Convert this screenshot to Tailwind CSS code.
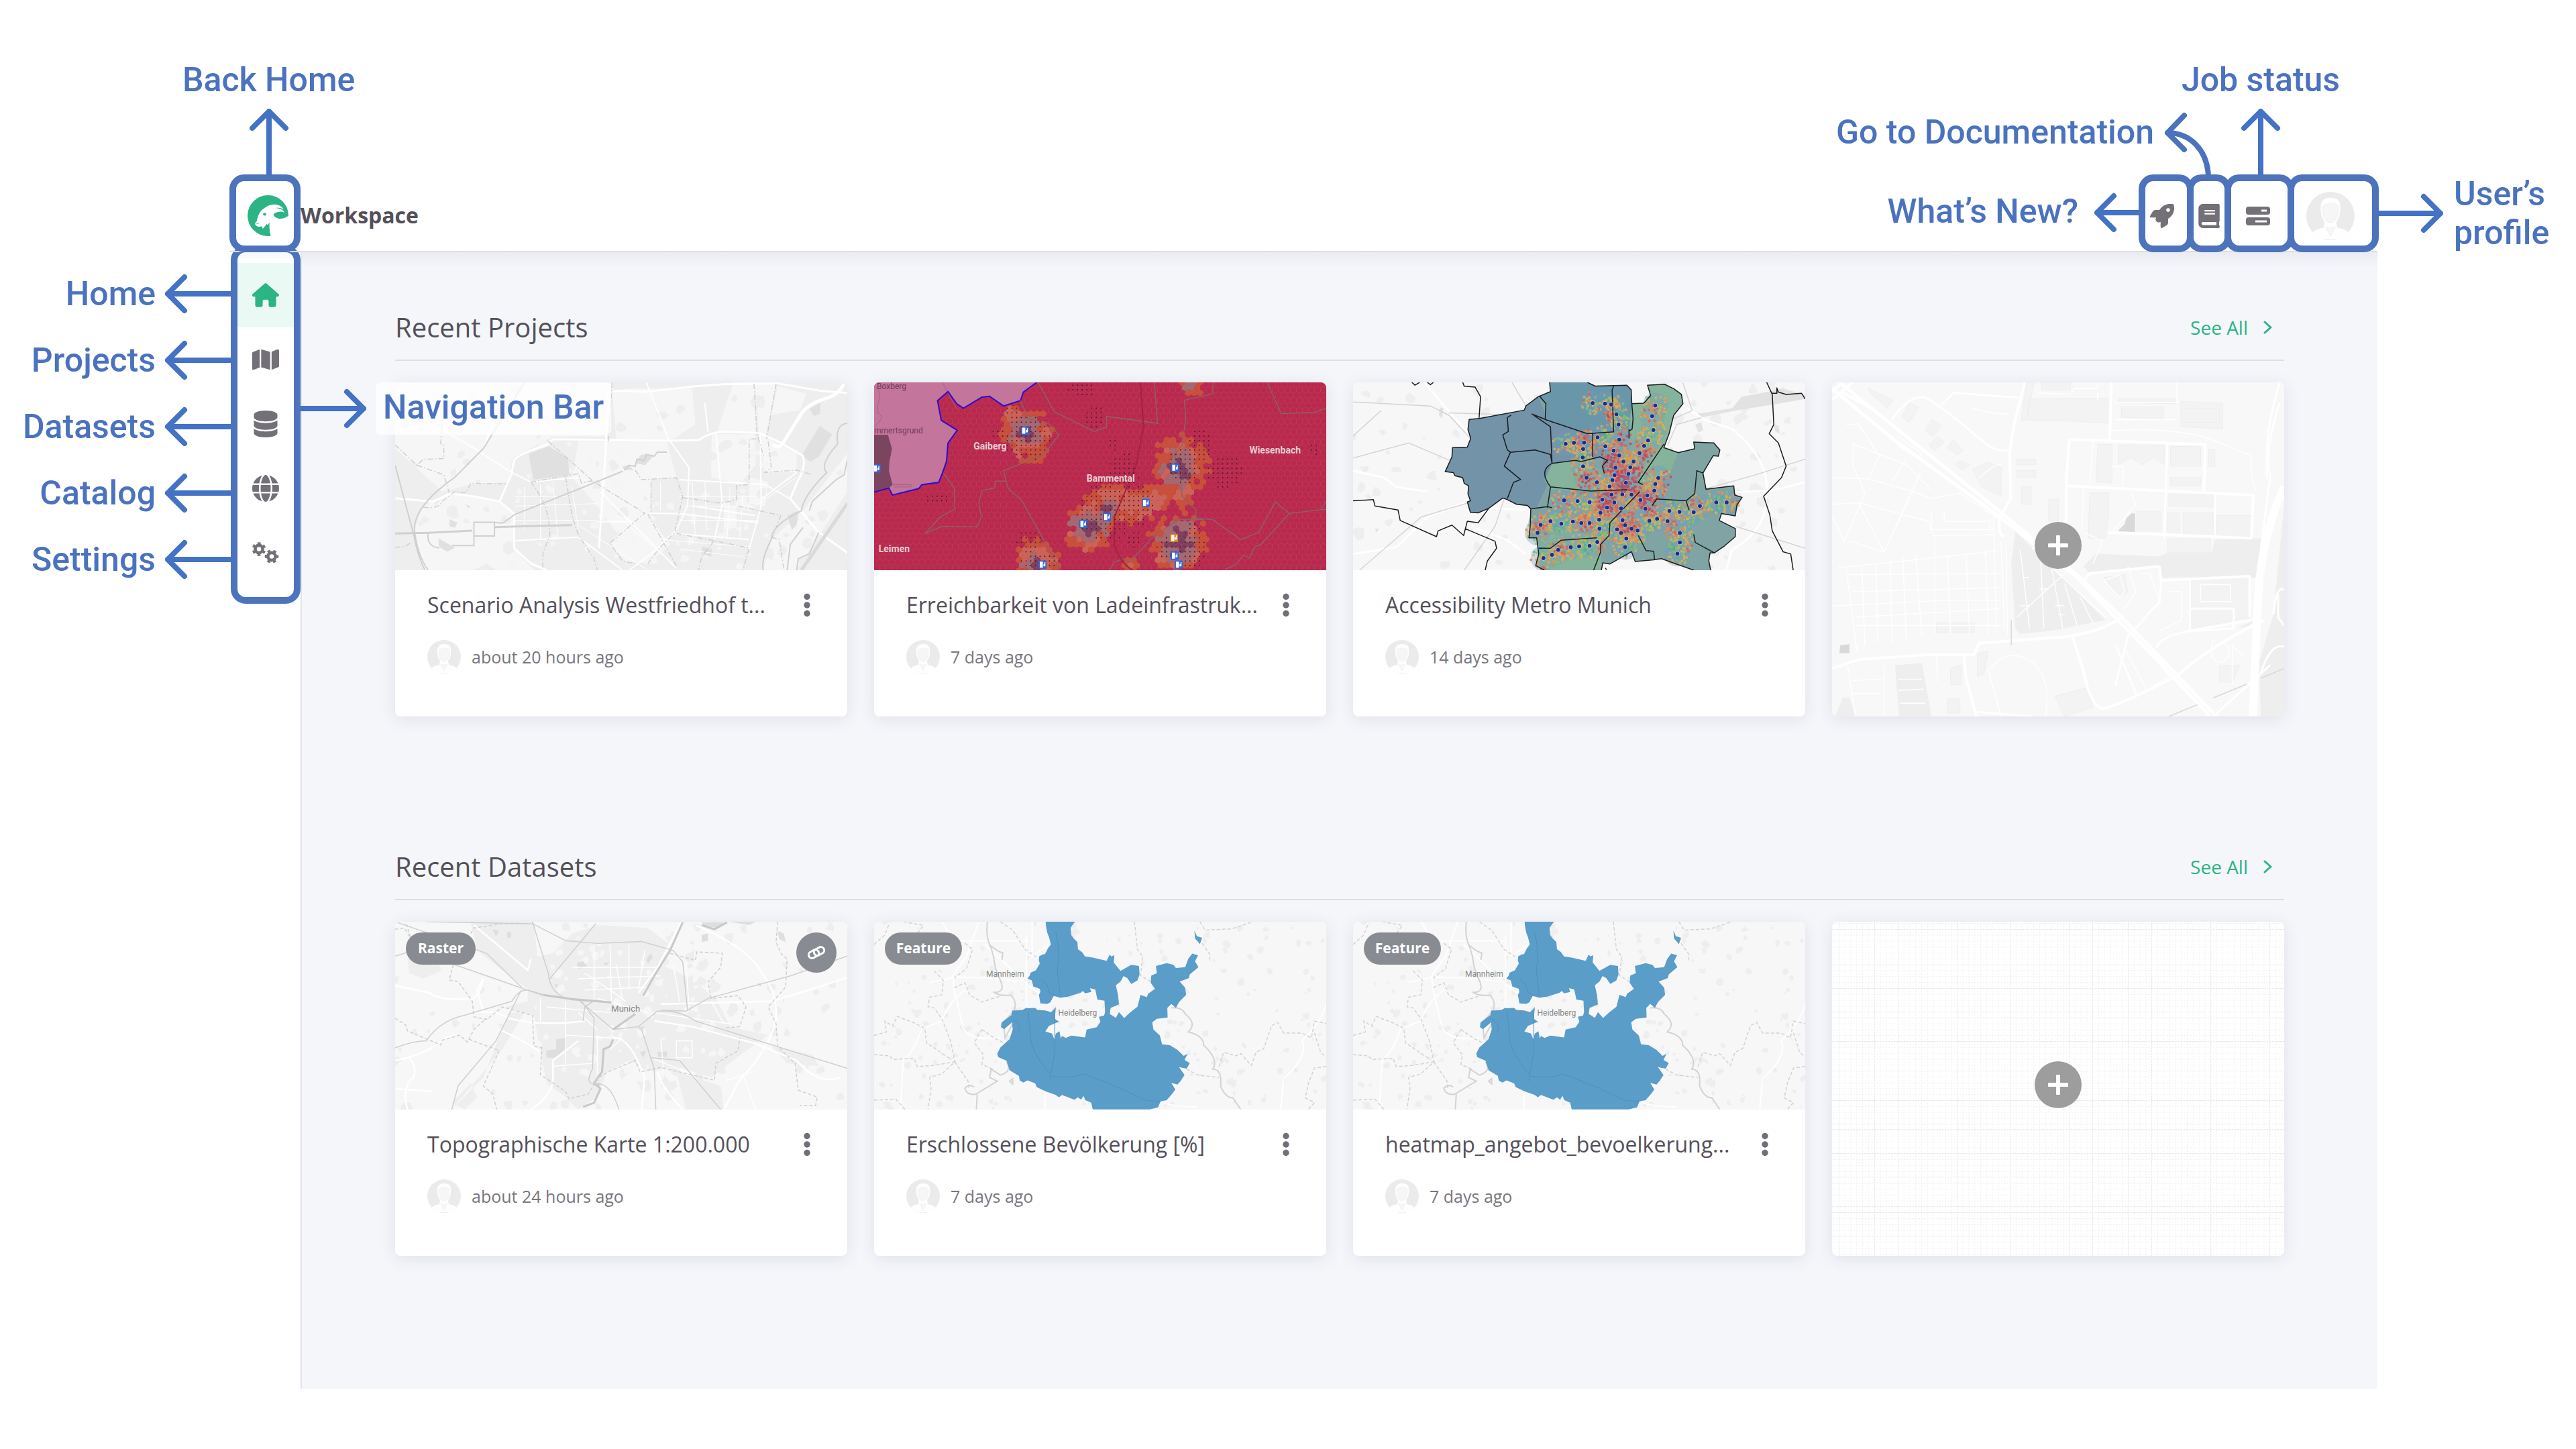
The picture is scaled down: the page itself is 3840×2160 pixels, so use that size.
<!DOCTYPE html>
<html lang="en">
<head>
<meta charset="utf-8">
<meta name="viewport" content="width=device-width, initial-scale=1">
<title>Workspace</title>
<script src="https://cdn.jsdelivr.net/npm/@tailwindcss/browser@4"></script>
</head>
<body class="bg-white font-['Open_Sans',sans-serif] text-[#54505a]">

<!-- Shared symbols -->
<svg class="hidden" aria-hidden="true">
  <symbol id="arrow-left" viewBox="0 0 98 60" preserveAspectRatio="xMinYMid slice"><path d="M29 5 4 30 29 55M4 30H98" fill="none" stroke="#4472c4" stroke-width="8" stroke-linecap="round" stroke-linejoin="round"/></symbol>
  <symbol id="arrow-right" viewBox="0 0 98 60" preserveAspectRatio="xMaxYMid slice"><path d="M69 5 94 30 69 55M94 30H0" fill="none" stroke="#4472c4" stroke-width="8" stroke-linecap="round" stroke-linejoin="round"/></symbol>
  <symbol id="arrow-up" viewBox="0 0 60 98"><path d="M5 29 30 4 55 29M30 4V98" fill="none" stroke="#4472c4" stroke-width="8" stroke-linecap="round" stroke-linejoin="round"/></symbol>
  <symbol id="avatar" viewBox="0 0 50 50">
    <circle cx="25" cy="25" r="25" fill="#ebebeb"/>
    <path d="M4 46Q6 39 18 37L19 31Q14 25 15 14Q16 6 25 6Q35 6 35 14Q36 25 31 31L32 37Q44 39 46 46Q36 52 25 50Q14 52 4 46Z" fill="#fefefe"/>
    <path d="M17 15Q25 9 33 14L33 21Q31 32 25 32Q19 32 17 21Z" fill="#f6f6f6" stroke="#ececec" stroke-width=".5"/>
    <path d="M20 36 25 46 30 36" fill="#f7f7f7" stroke="#ebebeb" stroke-width=".6"/>
    <path d="M19 49.600h12" stroke="#ebebeb" stroke-width=".8"/>
  </symbol>
  <symbol id="kebab" viewBox="0 0 24 36"><g fill="#716e77"><circle cx="12" cy="5.500" r="4.700"/><circle cx="12" cy="18" r="4.700"/><circle cx="12" cy="30.500" r="4.700"/></g></symbol>
  <symbol id="chevron" viewBox="0 0 16 20"><path d="M3 2l9 8-9 8" fill="none" stroke="#2bb381" stroke-width="3" stroke-linecap="round" stroke-linejoin="round"/></symbol>
  <symbol id="plus" viewBox="0 0 30 30"><path d="M15 2v26M2 15h26" stroke="#fff" stroke-width="6" stroke-linecap="round"/></symbol>

  <symbol id="map-heidelberg" viewBox="50 95 1468 784" preserveAspectRatio="none">
    <rect x="50" y="95" width="1468" height="784" fill="#f7f7f7"/>
    <path id="patches-heidelberg" fill="#eeeeee"/>
    <g fill="none" stroke="#fff" stroke-width="2">
      <path vector-effect="non-scaling-stroke" d="M563 95V240L620 190M272 95L300 165 330 175H550M410 190L550 360 590 400M390 95L350 240 300 330 230 348M305 320L310 380 340 540Q360 590 460 580M350 375Q290 430 270 510L205 540Q180 640 145 670L135 878M545 150V450M305 325L420 330 530 345M605 770V878M980 850Q1050 870 1100 868M1518 440Q1500 520 1440 590 1460 660 1380 750L1370 878"/>
    </g>
    <path vector-effect="non-scaling-stroke" d="M418 95Q412 150 425 190T440 260 460 340 440 390Q455 405 495 402 515 430 505 465L470 515 475 580 500 520M480 680Q500 720 460 735L430 710 425 745 450 760 380 815Q350 820 345 790 360 770 375 785M385 815 382 878M500 750l-10 10 10 12zM425 190Q450 220 468 225L465 255M1015 455Q1050 450 1060 480 1100 520 1070 555 1120 570 1120 610 1170 670 1150 710 1180 710 1175 780 1190 830 1215 830L1240 878" fill="none" stroke="#d3d3d3" stroke-width="2"/>
    <path vector-effect="non-scaling-stroke" d="M50 190L85 150 100 100M145 95L210 110 190 145M345 185L370 210 350 290 310 330M245 300L275 340 270 400 230 410 225 450 245 455 270 500 300 600 312 680M50 570L90 555 85 510 110 530 125 490 185 520 215 540 220 600 300 670M50 650L100 655 110 670 180 665 190 700 240 695 312 680 270 730 230 745 235 790 225 878M312 680L355 760 358 790M50 840L120 835 150 878M310 370L345 350 360 400 400 430 460 405M460 95L500 130 540 210 575 240M895 95L905 210 922 240 915 320 948 345M1108 95L1125 130 1210 125 1280 95M1115 185L1140 230 1140 262M1065 710L1100 735 1170 745M1170 700L1185 640 1225 655 1240 645 1275 695 1290 640 1315 625 1340 530 1360 515 1380 560 1440 560 1470 580 1480 510 1518 520M1480 560L1500 640 1518 660M1518 700L1480 705 1460 770 1450 830 1480 850 1460 878M400 545L375 600 405 650 400 690 435 710M400 545L440 580 470 600" fill="none" stroke="#d2d2d2" stroke-width="1.500" stroke-dasharray="5 3"/>
    <path fill="#5a9dc9" d="M607 95 608 112 612 140 618 160 624 190 615 205 605 230 596 232 586 240 585 256 588 270 575 298 558 308 556 318 548 332 562 340 567 365 588 375 590 388 585 400 590 436 612 438 622 432 633 405 655 412 680 408 720 392 728 384 735 394 755 388 751 372 768 378 775 420 798 425 800 470 797 486 780 492 785 512 773 535 740 545 735 578 700 572 690 570 672 580 660 572 656 582 652 552 640 562 635 586 628 562 606 553 618 530 650 512 637 500 640 452 625 472 605 465 580 463 573 455 548 456 545 454 530 464 498 466 496 485 464 515 462 535 472 544 498 515 500 545 490 585 460 620 450 645 453 660 480 675 490 715 520 738 523 758 535 766 548 757 573 770 578 785 605 802 640 818 650 828 660 818 700 838 712 828 722 838 730 822 736 840 755 850 760 878 945 878 972 870 980 845 1000 840 1020 810 1028 795 1015 768 1035 775 1045 760 1058 735 1040 702 1065 708 1075 685 1058 672 1068 646 1055 655 1035 630 1010 610 985 607 978 570 957 545 953 515 968 500 1003 495 1002 455 1015 438 1030 455 1040 430 1063 400 1060 370 1042 345 1072 330 1075 315 1103 285 1092 260 1102 235 1083 228 1070 250 1060 285 1030 288 1022 275 1000 268 965 280 968 310 950 320 948 350 962 375 940 395 935 410 915 400 905 450 880 475 862 497 845 472 835 496 815 480 818 455 845 440 842 400 835 360 850 345 860 322 872 330 885 355 905 340 912 315 910 280 885 275 850 300 828 265 830 235 820 240 815 232 805 258 760 245 735 240 725 222 712 210 710 180 698 165 690 150 688 120 702 95ZM1090 132 1098 155 1115 162 1108 188 1092 165Z"/>
    <path vector-effect="non-scaling-stroke" d="M640 140Q655 220 645 300L655 410M590 335Q615 350 618 390L640 405M550 470L560 600Q580 680 630 740 700 750 730 730L850 790 930 840 980 845M637 480V640L620 760M500 500Q530 530 520 555" fill="none" stroke="#4f90bd" stroke-width="1"/>
  </symbol>
</svg>

<!-- Callouts above the window -->
<div class="flex h-[260px] items-end justify-between pl-[272px] pr-[350px] font-['Roboto',sans-serif] text-[50px] leading-[58px] font-medium text-[#4a72bf]">
  <div class="flex flex-col items-center gap-[14px]">
    <p>Back Home</p>
    <svg class="h-[98px] w-[60px]"><use href="#arrow-up"/></svg>
  </div>
  <div class="flex items-end">
    <div class="flex items-start gap-3">
      <p class="mt-1">Go to Documentation</p>
      <svg class="h-24 w-[75px]" viewBox="0 0 75 96" fill="none" stroke="#4a72bf" stroke-width="8" stroke-linecap="round" stroke-linejoin="round"><path d="M33 8 8 34 33 59M8 34C42 34 68 60 69 100"/></svg>
    </div>
    <div class="-ml-12 flex w-60 flex-col items-center gap-[14px]">
      <p>Job status</p>
      <svg class="h-[98px] w-[60px]"><use href="#arrow-up"/></svg>
    </div>
  </div>
</div>

<!-- Header -->
<header class="relative z-20 flex pl-[342px]">
  <div class="flex h-[116px] flex-1 items-center border-b-2 border-[#dddfe3]">
    <a href="#home" aria-label="Back home" class="-mb-[2px] flex h-[116px] w-[106px] shrink-0 items-center justify-center rounded-[22px] border-10 border-[#4c73bc] bg-white pt-1.5 pl-2">
      <svg class="size-[61px]" viewBox="148 118 182 140" preserveAspectRatio="none">
        <ellipse cx="239" cy="188" rx="91" ry="70" fill="#2db484"/>
        <path fill="#fff" d="M252 260C246 242 244 226 246 211L237 220 234 216 216 233 212 225 197 226C187 224 181 220 181 214L190 205C193 188 205 170 220 164 238 152 262 147 280 151 296 153 306 161 308 167 298 161 284 160 272 162 290 162 309 168 312 178 304 173 284 172 264 182 262 190 280 200 300 198 312 197 324 192 332 187V262Z"/>
        <ellipse cx="224" cy="183" rx="7" ry="5" fill="#2db484"/>
        <path d="M182 212Q190 218 200 214" fill="none" stroke="#2db484" stroke-width="2"/>
      </svg>
    </a>
    <h1 class="pt-2 text-[32px] leading-10 font-bold">Workspace</h1>
    <div class="ml-auto flex items-center gap-6 font-['Roboto',sans-serif] text-[50px] leading-[58px] font-medium text-[#4a72bf]">
      <p class="pb-1">What’s New?</p>
      <svg class="h-[60px] w-[66px]"><use href="#arrow-left"/></svg>
    </div>
    <div class="-mr-[2px] -mb-[2px] flex h-[116px]">
      <button aria-label="What's new" class="flex w-[82px] items-center justify-center rounded-[22px] border-10 border-[#4c73bc] pt-2 pr-3">
        <svg class="size-9 shrink-0" viewBox="0 0 512 512" fill="#737077"><path d="M156.600 384.900L125.700 354c-8.500-8.500-11.500-20.800-7.700-32.200c3-8.900 7-20.500 11.800-33.800L24 288c-8.600 0-16.600-4.600-20.900-12.100s-4.200-16.700 .2-24.100l52.500-88.500c13-21.900 36.500-35.300 61.900-35.300l82.300 0c2.400-4 4.800-7.700 7.200-11.300C289.100-4.100 411.100-8.100 483.900 5.300c11.600 2.100 20.600 11.200 22.800 22.800c13.400 72.900 9.300 194.800-111.400 276.700c-3.500 2.400-7.300 4.800-11.300 7.200v82.300c0 25.400-13.400 49-35.300 61.900l-88.500 52.500c-7.400 4.400-16.600 4.500-24.100 .2s-12.100-12.200-12.100-20.900V380.800c-14.100 4.900-26.400 8.900-35.700 11.900c-11.200 3.600-23.400 .5-31.800-7.800zM384 168a40 40 0 1 0 0-80 40 40 0 1 0 0 80z"/></svg>
      </button>
      <button aria-label="Documentation" class="-ml-[10px] flex w-[66px] items-center justify-center rounded-[22px] border-10 border-[#4c73bc] pt-2">
        <svg class="h-9 w-8 shrink-0" viewBox="0 0 448 512" fill="#737077"><path d="M448 360V24c0-13.300-10.700-24-24-24H96C43 0 0 43 0 96v320c0 53 43 96 96 96h328c13.300 0 24-10.700 24-24v-16c0-7.500-3.500-14.300-8.900-18.700-4.200-15.400-4.200-59.300 0-74.700 5.400-4.300 8.900-11.100 8.900-18.600zM128 134c0-3.300 2.700-6 6-6h212c3.300 0 6 2.700 6 6v20c0 3.300-2.700 6-6 6H134c-3.300 0-6-2.700-6-6v-20zm0 64c0-3.300 2.700-6 6-6h212c3.300 0 6 2.700 6 6v20c0 3.300-2.700 6-6 6H134c-3.300 0-6-2.700-6-6v-20zm253.400 250H96c-17.700 0-32-14.300-32-32 0-17.600 14.400-32 32-32h285.400c-1.900 17.100-1.900 46.900 0 64z"/></svg>
      </button>
      <button aria-label="Job status" class="-ml-[10px] flex w-[104px] items-center justify-center rounded-[22px] border-10 border-[#4c73bc] pt-2 pr-1">
        <svg class="h-7 w-9" viewBox="0 0 36 28"><g fill="#737077"><rect width="36" height="12" rx="4"/><rect y="16" width="36" height="12" rx="4"/></g><path d="M23 6h8M14 22h17" stroke="#fff" stroke-width="3"/></svg>
      </button>
      <button aria-label="User's profile" class="-ml-[10px] flex w-[136px] items-center justify-center rounded-[22px] border-10 border-[#4c73bc] pt-2 pr-2">
        <svg class="size-[72px]"><use href="#avatar"/></svg>
      </button>
    </div>
  </div>
  <div class="flex w-[296px] shrink-0 items-center gap-4 font-['Roboto',sans-serif] text-[50px] leading-[58px] font-medium text-[#4a72bf]">
    <svg class="h-[60px] w-[98px] shrink-0"><use href="#arrow-right"/></svg>
    <p>User’s<br>profile</p>
  </div>
</header>

<div class="flex pr-[296px] pb-[90px]">
  <!-- Sidebar callouts -->
  <ul class="flex w-[344px] shrink-0 flex-col pt-3 font-['Roboto',sans-serif] text-[50px] leading-[58px] font-medium text-[#4a72bf]">
    <li class="flex h-[99px] items-center justify-end gap-[14px]">Home <svg class="h-[60px] w-[98px]"><use href="#arrow-left"/></svg></li>
    <li class="flex h-[99px] items-center justify-end gap-[14px]">Projects <svg class="h-[60px] w-[98px]"><use href="#arrow-left"/></svg></li>
    <li class="flex h-[99px] items-center justify-end gap-[14px]">Datasets <svg class="h-[60px] w-[98px]"><use href="#arrow-left"/></svg></li>
    <li class="flex h-[99px] items-center justify-end gap-[14px]">Catalog <svg class="h-[60px] w-[98px]"><use href="#arrow-left"/></svg></li>
    <li class="flex h-[99px] items-center justify-end gap-[14px]">Settings <svg class="h-[60px] w-[98px]"><use href="#arrow-left"/></svg></li>
  </ul>

  <!-- Navigation bar -->
  <aside class="relative z-10 w-[104px] shrink-0">
    <nav class="-mt-[10px] rounded-[22px] border-10 border-[#4c73bc] bg-linear-to-b from-[#f7f7f8] to-white to-[16px] pt-4 pb-[18px]">
      <a href="#home" aria-label="Home" class="flex h-24 items-center justify-center bg-[#ebf9f5]"><svg class="h-9 w-10" viewBox="0 0 576 512" fill="#2db484"><path d="M575.800 255.500c0 18-15 32.100-32 32.100h-32l.7 160.200c0 2.700-.2 5.400-.5 8.100V472c0 22.100-17.900 40-40 40H392c-22.100 0-40-17.900-40-40V384c0-17.700-14.300-32-32-32H256c-17.700 0-32 14.300-32 32v88c0 22.100-17.900 40-40 40H104c-22.100 0-40-17.900-40-40V287.600H32c-18 0-32-14-32-32.100c0-9 3-17 10-24L266.400 8c7-7 15-8 22-8s15 2 21 7L564.800 231.500c8 7 12 15 11 24z"/></svg></a>
      <a href="#projects" aria-label="Projects" class="flex h-24 items-center justify-center"><svg class="h-9 w-10" viewBox="0 0 576 512" fill="#737077"><path d="M384 476.100L192 421.200V35.900L384 90.800V476.100zm32-1.200V88.400L543.100 37.500c15.800-6.300 32.900 5.300 32.900 22.300V394.600c0 9.800-6 18.600-15.100 22.300L416 474.800zM15.100 95.100L160 37.200V423.600L32.900 474.500C17.100 480.800 0 469.200 0 452.200V117.400c0-9.800 6-18.600 15.100-22.300z"/></svg></a>
      <a href="#datasets" aria-label="Datasets" class="flex h-24 items-center justify-center"><svg class="size-10" viewBox="-32 0 512 512" fill="#737077"><path d="M448 80v48c0 44.200-100.300 80-224 80S0 172.200 0 128V80C0 35.800 100.300 0 224 0S448 35.800 448 80zM393.200 214.700c20.800-7.400 39.900-16.900 54.800-28.600V288c0 44.200-100.300 80-224 80S0 332.200 0 288V186.100c14.900 11.800 34 21.200 54.800 28.600C99.700 230.700 159.500 240 224 240s124.300-9.300 169.200-25.300zM0 346.100c14.900 11.800 34 21.200 54.800 28.600C99.700 390.700 159.500 400 224 400s124.300-9.300 169.200-25.300c20.800-7.400 39.900-16.900 54.800-28.600V432c0 44.200-100.300 80-224 80S0 476.200 0 432V346.100z"/></svg></a>
      <a href="#catalog" aria-label="Catalog" class="flex h-24 items-center justify-center"><svg class="size-10" viewBox="0 0 512 512" fill="#737077"><path d="M352 256c0 22.200-1.200 43.600-3.300 64H163.300c-2.200-20.400-3.300-41.800-3.300-64s1.200-43.600 3.300-64H348.700c2.200 20.400 3.300 41.800 3.300 64zm28.800-64H503.900c5.300 20.500 8.100 41.900 8.100 64s-2.800 43.500-8.100 64H380.800c2.100-20.600 3.200-42 3.200-64s-1.100-43.400-3.200-64zm112.600-32H376.700c-10-63.900-29.800-117.400-55.300-151.600c78.300 20.700 142 77.500 171.900 151.600zm-149.100 0H167.700c6.100-36.400 15.500-68.600 27-94.700c10.500-23.600 22.200-40.700 33.500-51.500C239.400 3.200 248.700 0 256 0s16.600 3.200 27.800 13.800c11.300 10.800 23 27.900 33.500 51.500c11.600 26 20.900 58.200 27 94.700zm-209 0H18.600C48.600 85.900 112.200 29.100 190.600 8.400C165.100 42.600 145.300 96.100 135.300 160zM8.100 192H131.200c-2.100 20.600-3.200 42-3.200 64s1.100 43.400 3.200 64H8.100C2.800 299.500 0 278.100 0 256s2.800-43.500 8.100-64zM194.700 446.600c-11.600-26-20.900-58.200-27-94.600H344.300c-6.100 36.400-15.500 68.600-27 94.600c-10.500 23.600-22.200 40.700-33.500 51.500C272.600 508.800 263.300 512 256 512s-16.600-3.200-27.800-13.800c-11.300-10.800-23-27.900-33.500-51.500zM135.300 352c10 63.900 29.800 117.400 55.300 151.600C112.200 482.900 48.600 426.100 18.600 352H135.300zm358.100 0c-30 74.100-93.600 130.900-171.900 151.600c25.500-34.200 45.200-87.700 55.300-151.600H493.400z"/></svg></a>
      <a href="#settings" aria-label="Settings" class="flex h-24 items-center justify-center"><svg class="size-10" viewBox="0 0 40 40" fill="none" stroke="#737077"><circle cx="10" cy="14.500" r="5.600" stroke-width="4.600"/><circle cx="10" cy="14.500" r="8.600" stroke-width="3.400" stroke-dasharray="4.503" stroke-dashoffset="2.250" transform="rotate(30 10 14.500)"/><circle cx="29" cy="25.500" r="5.600" stroke-width="4.600"/><circle cx="29" cy="25.500" r="8.600" stroke-width="3.400" stroke-dasharray="4.503" stroke-dashoffset="2.250"/></svg></a>
    </nav>
    <div class="absolute top-[194px] left-full flex items-center gap-[14px] font-['Roboto',sans-serif] text-[50px] leading-[58px] font-medium text-[#4a72bf]">
      <svg class="h-[60px] w-[98px] shrink-0"><use href="#arrow-right"/></svg>
      <p class="rounded-lg bg-white/75 px-[11px] pt-2 pb-3 whitespace-nowrap">Navigation Bar</p>
    </div>
  </aside>

  <!-- Workspace content -->
  <main class="min-w-0 flex-1 border-l-2 border-[#e2e4ea] bg-[#f4f6fa]">
    <div class="h-6 bg-linear-to-b from-[#ebecf2] to-[#f4f6fa]"></div>
    <div class="flex flex-col gap-44 px-[139px] pt-10 pb-[198px]">

      <section class="flex flex-col gap-8" aria-labelledby="recent-projects">
        <div class="flex h-[98px] items-center justify-between border-b-2 border-[#dcdee3] pr-4">
          <h2 id="recent-projects" class="text-[40px] leading-[56px]">Recent Projects</h2>
          <a href="#projects" class="flex items-center gap-[22px] text-[28px] leading-9 text-[#2bb381]">See All <svg class="h-5 w-4"><use href="#chevron"/></svg></a>
        </div>
        <div class="grid grid-cols-4 gap-10">

          <article class="h-[498px] overflow-hidden rounded-lg bg-white shadow-[0_4px_24px_rgba(58,53,90,0.10)]">
            <svg class="h-[280px] w-full" viewBox="61 84 1429 784" preserveAspectRatio="none" aria-hidden="true">
              <rect x="61" y="84" width="1429" height="784" fill="#eeeeee"/>
              <path fill="#f6f6f6" d="M61 84H747L730 310H560L430 400 420 500 300 510 210 540 61 360ZM150 600L235 550 390 580 437 640V770L310 870H150L122 700ZM640 330H920L950 480 870 490 866 630 760 710 700 600 620 480ZM800 110H1000L1010 260 940 320H760L747 120ZM1060 300H1200V430L1150 510 1060 480ZM1130 84H1200V290L1080 285ZM1200 90H1265L1230 320 1210 300ZM1270 100L1360 130 1340 200 1250 220ZM1350 620L1490 380V540L1330 868H1225L1250 740ZM800 650L860 640 930 760 860 840 790 830 740 760ZM1210 300L1330 380 1330 460 1230 460ZM1100 600H1140V690L1100 700ZM1180 480L1240 500 1230 600 1180 590ZM310 800L430 770 500 868H380Z"/>
              <path id="patches-west-a" fill="#eeeeee"/>
              <path id="patches-west-b" fill="#f5f5f5"/>
              <path fill="#e0e0e0" d="M483 383 545 350 608 400 611 470 498 490ZM1403 265 1442 300 1400 395 1375 415 1345 390ZM1370 195 1405 170V215L1385 225ZM780 435L800 430 815 450 785 450ZM820 420 840 385 880 390 850 430ZM198 735 250 775 225 790 200 770ZM233 655 258 670 250 690 233 685ZM1300 640 1335 620 1330 680 1315 700ZM1030 770 1063 780 1060 812 1030 800ZM283 593l15 8-5 8z"/>
              <g fill="none" stroke="#fff" stroke-linejoin="round">
                <path vector-effect="non-scaling-stroke" stroke-width="3" d="M747 118 855 123 1010 100 1100 92 1270 88 1400 118 1490 128M928 327 560 321 540 345Q445 385 437 410L428 470 392 578M61 568 180 582 235 548 310 560 390 580 437 632V775L490 840 540 868M735 118 725 400 705 775M928 327 1020 325Q1060 290 1100 290L1210 295 1270 330 1350 390Q1360 440 1335 490L1310 570 1400 710 1490 795"/>
                <path vector-effect="non-scaling-stroke" stroke-width="5" d="M1480 90Q1460 140 1420 152 1360 175 1340 225L1283 345Q1268 362 1256 342"/>
                <path vector-effect="non-scaling-stroke" stroke-width="2" d="M61 290 180 260 300 350 430 460 490 500 640 480M855 84 925 320 990 440 985 600 950 700 870 800 800 868M1075 290 1095 590 1070 740M1215 295 1218 600 1180 780M960 490 1230 510 1310 570M865 630 960 632 1210 670M437 745 640 730 780 868M710 540 950 860M1330 460 1220 570M210 250 61 292M420 80 340 360M1040 170 1050 290M700 665H810M945 715 1180 740M1000 600 1200 640"/>
                <path vector-effect="non-scaling-stroke" stroke-width="1" d="M470 520V700M520 510V740M560 500 575 730M620 520 640 700M900 500V620M1000 500 1010 740M1040 500 1045 700M1120 520 1110 740M1160 560 1150 730M440 560H600M440 600 700 590M440 660H700M640 680 860 868M760 640 940 840M960 560H1210M960 600H1200M960 660H1210M900 740 1180 770M960 780 1150 810M1200 600 1330 480"/>
              </g>
              <g fill="none" stroke="#d0d0d0">
                <path vector-effect="non-scaling-stroke" stroke-width="2" d="M470 84 340 360 250 480Q120 600 122 700 130 800 165 868M61 430 120 720Q130 800 155 868M440 635 640 530 780 455M375 668 400 672 440 635M310 668H375V725H310ZM165 712Q160 770 200 775M240 765H310V725M1490 255Q1450 260 1460 340 1400 430 1425 460 1350 560 1345 620 1250 680 1250 740 1215 830 1225 868M1490 410 1480 470 1455 490 1380 580 1370 620M1350 690 1310 760 1300 868M1400 710 1370 800 1335 820 1330 868M785 450 800 430 820 435 825 405 850 410 855 385 880 392 890 375 920 375"/>
                <path vector-effect="non-scaling-stroke" stroke-width="3" d="M61 715 165 712 305 703M375 688 620 680"/>
                <path vector-effect="non-scaling-stroke" stroke-width="5" stroke="#dadada" d="M1490 590 1345 868"/>
                <path vector-effect="non-scaling-stroke" stroke-width="1.500" stroke-dasharray="8 3 2 3" d="M61 345 130 430 150 405 215 402V345L205 340 210 240M130 430 215 470 232 545M150 605Q200 615 210 580L250 540 285 545 300 505 420 508M545 330 690 500 850 630 740 755 780 830 820 840M490 500 640 465 650 505 680 495 690 500M820 450 840 490 950 482 970 560 945 710 900 770 860 840M970 565 1090 588 1140 575 1140 515 1180 510V320H1205M1195 90 1205 300 1225 390M1265 90 1235 320M1240 330 1250 440 1230 460 1330 450 1380 470M490 500Q550 600 550 720L528 800V868M600 480 620 640 640 720 690 820 700 868M1145 600 1280 640 1250 740M870 500V630M950 715 1070 745 1180 775 1160 868M1070 745 1030 810 1020 868M1250 730 1275 740 1290 868M747 84 735 330M860 635 950 850M61 772 90 770 115 750"/>
              </g>
            </svg>
            <div class="px-12 pt-7">
              <div class="flex items-center justify-between gap-4">
                <h3 class="text-[32px] leading-12 whitespace-nowrap">Scenario Analysis Westfriedhof t...</h3>
                <button aria-label="More options" class="shrink-0"><svg class="h-9 w-6"><use href="#kebab"/></svg></button>
              </div>
              <div class="mt-7 flex items-center gap-4 text-[25px] leading-8 text-[#79767d]"><svg class="size-[50px]"><use href="#avatar"/></svg>about 20 hours ago</div>
            </div>
          </article>

          <article class="h-[498px] overflow-hidden rounded-lg bg-white shadow-[0_4px_24px_rgba(58,53,90,0.10)]">
            <div class="relative h-[280px] font-['Roboto',sans-serif] text-[14px] leading-4 font-bold text-[#e6cfd4]">
              <svg class="size-full" viewBox="50 58 1468 812" preserveAspectRatio="none" aria-hidden="true">
                <defs><pattern id="hex" width="19.600" height="45.200" patternUnits="userSpaceOnUse"><path d="M9.800 0V7.500L0 15V30L9.800 37.600V45.200M9.800 7.500 19.600 15M9.800 37.600 19.600 30" fill="none" stroke="#d0597a" stroke-width="1.300"/></pattern></defs>
                <rect x="50" y="58" width="1468" height="812" fill="#b8294d"/>
                <g id="hex-clusters"></g>
                <rect x="50" y="58" width="1468" height="812" fill="url(#hex)" opacity=".55"/>
                <path d="M50 58H578L535 100 525 137 470 160 425 118 400 122 340 170 318 150 290 98 256 137 268 222 320 265 290 320 285 400 272 450 260 490 205 500 195 517 110 545 98 515 50 532Z" fill="#c4759c"/>
                <path d="M50 285H95L108 345 100 400 98 440 110 500 98 515 50 532Z" fill="#7b4560"/>
                <path vector-effect="non-scaling-stroke" stroke="#a3627f" fill="none" d="M272 58 300 130 320 175M50 75Q75 90 65 140T70 200 50 250M110 500H170V510H115"/>
                <path vector-effect="non-scaling-stroke" stroke-width="2" stroke="#2d0bd0" fill="none" d="M578 58 535 100 525 137 470 160 425 118 400 122 340 170 318 150 290 98 256 137 268 222 320 265 290 320 285 400 272 450 260 490 205 500 195 517 110 545 98 515 50 532"/>
                <path vector-effect="non-scaling-stroke" stroke-width="1.500" stroke="#8d6166" fill="none" d="M582 58 635 185 765 270 805 250V205L970 235 960 58M525 137 550 215 615 235 650 285 600 370 470 440 485 515 530 570 655 870M480 485H445L440 515 400 525 390 580 398 640 385 683 270 680 215 712 265 640 312 605 310 515 275 450M1150 58V108L1057 135 1062 210 1050 330 1025 370 1045 480 1050 550 1095 610V645L1150 652 1240 738 1300 705 1353 575 1398 625 1500 608 1518 570M1398 625 1305 760 1285 770 1270 818 1250 805 1220 850 1190 865M1325 58 1340 100 1372 193 1480 188 1518 170M1120 652 1040 650 960 720 880 835 860 820 830 835 815 870M1500 608H1518"/>
                <path vector-effect="non-scaling-stroke" stroke-width="2" stroke="#a1233f" fill="none" d="M915 58 925 250 900 420 830 640 830 760Q850 840 890 870"/>
                <path id="hex-dots" vector-effect="non-scaling-stroke" stroke="#451b2f" stroke-width="2" stroke-linecap="round"/>
                <g id="pumps"></g>
              </svg>
              <span class="absolute top-0 left-1 text-[12px] leading-3 font-normal text-[#6d3a55]">Boxberg</span>
              <span class="absolute top-[64px] left-0 text-[12px] font-normal text-[#6d3a55]">mmertsgrund</span>
              <span class="absolute top-[87px] left-[22%]">Gaiberg</span>
              <span class="absolute top-[135px] left-[47%]">Bammental</span>
              <span class="absolute top-[93px] left-[83%]">Wiesenbach</span>
              <span class="absolute top-[240px] left-[1%]">Leimen</span>
            </div>
            <div class="px-12 pt-7">
              <div class="flex items-center justify-between gap-4">
                <h3 class="text-[32px] leading-12 whitespace-nowrap">Erreichbarkeit von Ladeinfrastruk...</h3>
                <button aria-label="More options" class="shrink-0"><svg class="h-9 w-6"><use href="#kebab"/></svg></button>
              </div>
              <div class="mt-7 flex items-center gap-4 text-[25px] leading-8 text-[#79767d]"><svg class="size-[50px]"><use href="#avatar"/></svg>7 days ago</div>
            </div>
          </article>

          <article class="h-[498px] overflow-hidden rounded-lg bg-white shadow-[0_4px_24px_rgba(58,53,90,0.10)]">
            <svg class="h-[280px] w-full" viewBox="59 58 1468 812" preserveAspectRatio="none" aria-hidden="true">
              <rect x="59" y="58" width="1468" height="812" fill="#f7f7f7"/>
              <path id="patches-metro" fill="#eeeeee"/>
              <path fill="#e2e2e2" d="M1290 170 1320 120 1420 95 1450 85 1527 110V130L1440 150 1300 180 1190 210 1170 195ZM1170 240 1190 230 1195 265 1180 275ZM340 165 352 170 348 215 338 200ZM1425 240 1440 245 1445 280 1430 270ZM130 690 143 690 135 708Z"/>
              <path vector-effect="non-scaling-stroke" fill="none" stroke="#fff" stroke-width="3" d="M290 58 420 260 480 350M59 800 200 770 300 640 420 580M1100 130 1200 220 1290 260Q1420 400 1400 560 1400 700 1290 780L1270 870M1200 540 1420 525 1527 490M59 440 160 470 200 510 300 530M460 690 560 740 620 800M480 600 620 610"/>
              <path vector-effect="non-scaling-stroke" fill="none" stroke="#d4d4d4" stroke-width="1.500" d="M59 143 310 160 370 200 440 300M59 385 240 320 380 400M80 870 280 640 430 580M550 560 520 680 420 870M575 58 620 160M1300 680 1527 775M1527 390 1360 460 1200 520M150 180 59 290M370 190 500 195 620 205M1130 60 1160 180 1100 215M1080 330 1110 240 1190 210"/>
              <path fill="#80a4a4" d="M697 58 700 98 660 120 620 160 615 178 470 214 436 218 432 262 441 300 430 338 382 340 380 380 358 444 385 448 390 462 415 470 420 495 434 505 432 540 440 570 430 575 440 620 465 622 500 602 545 558 560 565 590 585 625 590 636 605 634 680 630 730 655 730 662 800 652 850 680 870H865L870 838 893 843 963 790 975 832 1035 825 1060 820 1165 870H1220L1214 830 1218 795 1232 795 1265 765 1300 725V690L1248 655 1255 625 1300 635 1305 590 1322 555 1298 545 1295 505 1205 520 1195 450 1228 375 1245 377 1250 350 1230 320 1165 316 1168 345 1115 362 1068 340 1085 280 1100 200 1130 150 1125 110 1100 85 1070 66 1015 70 1025 115 1003 148 964 150 962 90 948 70 845 74 820 58Z"/>
              <path fill="#7393a9" d="M660 120 620 160 615 178 470 214 436 218 432 262 441 300 430 338 382 340 380 380 358 444 385 448 390 462 415 470 420 495 434 505 432 540 440 570 430 575 440 620 465 622 500 602 545 558 560 565 590 585 625 590 636 605 655 600 690 500 710 420 880 380V280L820 280 690 215Z"/>
              <path fill="#6996a8" d="M697 58H820L845 74 948 70 962 90 964 150 965 215 955 260 900 272 820 280 690 215 683 150 660 120 700 98Z"/>
              <path fill="#86b39b" d="M964 150H1003L1025 115 1015 70 1070 66 1100 85 1125 110 1130 150 1100 200 1085 280 1068 340 1115 362 1090 440 1050 480 990 490 960 430 953 265ZM705 410 780 395 870 440 880 510 820 530 700 520 680 480ZM655 730 740 700 860 720 865 870H680L652 850 662 800Z"/>
              <g id="metro-heat"></g>
              <path vector-effect="non-scaling-stroke" fill="none" stroke="#1a1c1e" stroke-width="1.500" stroke-linejoin="round" d="M697 58 700 98 660 120 620 160 615 178 470 214 436 218 432 262 441 300 430 338 382 340 380 380 358 444 385 448 390 462 415 470 420 495 434 505 432 540 440 570 430 575 440 620 465 622 500 602 545 558 560 565 590 585 625 590 636 605 634 680 630 730 655 730 662 800 652 850 680 870M865 870 870 838 893 843 963 790 975 832 1035 825 1060 820 1165 870M1220 870 1214 830 1218 795 1232 795 1265 765 1300 725V690L1248 655 1255 625 1300 635 1305 590 1322 555 1298 545 1295 505 1205 520 1195 450 1228 375 1245 377 1250 350 1230 320 1165 316 1168 345 1115 362 1068 340 1085 280 1100 200 1130 150 1125 110 1100 85 1070 66 1015 70 1025 115 1003 148 964 150 962 90 948 70 845 74 820 58M415 58 420 75 455 78 473 120 468 214M572 200 560 210 563 270 545 285 560 350 570 360 550 420 603 478 580 490 560 560M570 360 650 350 700 370 705 408 700 250 640 195 690 222 820 280 905 272 900 90 905 75M683 215 685 150 665 118M837 280V380M705 408 780 395 800 400 860 380 885 395 868 420 875 450M705 408Q660 440 700 510L830 528 950 522M690 600 700 510M636 605 690 595 705 600M955 260V300M953 270 965 260 968 215 964 150M1068 325 985 490 1000 500M1195 450 1175 440 1168 540 1140 570 1045 562 1030 590M1140 570 1150 610M1165 715 1170 750 1232 795M840 870 863 790 862 760 890 720 893 665 990 530M985 720 1010 785 1035 788 1038 825M662 775 700 775 735 740 850 730M250 58 260 70 275 58M300 58 310 68 320 58M59 570 125 565 130 592 205 610 212 655 330 725 335 700 380 675 418 720 430 658 465 665 500 602M422 690 520 745 525 775 495 830 488 870M1402 58 1420 110 1425 240 1410 280 1440 320 1465 420 1450 470 1392 550 1412 630 1420 700 1455 790 1480 800 1488 870M1418 105 1435 105V82L1440 100 1465 110 1515 105 1527 130M878 860 882 868"/>
              <path id="metro-stops-ring" vector-effect="non-scaling-stroke" stroke="#dfe3f2" stroke-width="7" stroke-linecap="round"/>
              <path id="metro-stops" vector-effect="non-scaling-stroke" stroke="#1c2f85" stroke-width="6" stroke-linecap="round"/>
            </svg>
            <div class="px-12 pt-7">
              <div class="flex items-center justify-between gap-4">
                <h3 class="text-[32px] leading-12 whitespace-nowrap">Accessibility Metro Munich</h3>
                <button aria-label="More options" class="shrink-0"><svg class="h-9 w-6"><use href="#kebab"/></svg></button>
              </div>
              <div class="mt-7 flex items-center gap-4 text-[25px] leading-8 text-[#79767d]"><svg class="size-[50px]"><use href="#avatar"/></svg>14 days ago</div>
            </div>
          </article>

          <article class="grid h-[498px] overflow-hidden rounded-lg bg-white shadow-[0_4px_24px_rgba(58,53,90,0.10)]">
            <svg class="col-start-1 row-start-1 h-[498px] w-full" viewBox="66 308 1428 1184" preserveAspectRatio="none" aria-hidden="true">
              <rect x="66" y="308" width="1428" height="1184" fill="#f8f8f8"/>
              <path fill="#eeeeee" d="M645 835 930 1150 780 1185 660 1200 645 1180 632 950ZM860 960 900 915 1100 925 1130 910H1265L1275 865 1430 860 1415 1000 1110 1000 1100 960 880 985ZM1494 740V1492H1420L1415 1300 1460 1130ZM265 1310 350 1303 380 1492H278ZM100 1425 120 1425 142 1492H75ZM1345 1180 1400 1150 1385 1170Z"/>
              <path fill="#d9d9d9" d="M968 836 990 810 995 790 1012 772H1023V838ZM92 1240 121 1236V1268H89Z"/>
              <path vector-effect="non-scaling-stroke" fill="#f3f3f3" stroke="#eeeeee" d="M680 308H705L680 440 663 445ZM685 365H938V452L810 445 685 443ZM970 366H1152V384L970 380ZM980 395H1113V437L980 432ZM1168 375 1300 382V473L1168 465ZM1170 400H1290V450H1170ZM728 308H820V335H728ZM905 528H950V665L900 660ZM970 530H1115V600L1080 575 1045 600 1010 575 970 600ZM1135 535H1230V605H1135ZM1135 645H1230V675H1135ZM1255 545H1275V607H1255ZM880 700H940V770L930 860H875ZM1130 705H1272V750L1130 745ZM1175 770H1270V852H1175ZM1280 780H1392V855H1280ZM1028 765H1105V835H1028ZM1125 770H1163V840H1125ZM1125 862H1262V912H1125ZM750 722H782V800H750ZM665 678H695V740H665ZM310 380 340 395 310 450 287 430ZM180 330 260 370 240 400 190 350ZM400 500 420 520 390 550 372 530ZM450 510 480 550 460 565 430 540ZM395 1160H515V1195H395ZM470 585 500 600 480 620 455 600ZM510 615 540 680 600 710V610L560 590ZM525 1270 560 1260 545 1340 525 1350ZM440 1320 475 1310V1380H440ZM430 1430H470V1480H430ZM770 1420 870 1390 890 1460 800 1492ZM1200 1000H1380L1390 1140 1200 1180ZM925 1000 990 990 1000 1050 975 1070ZM1290 1310H1355L1330 1370H1290ZM380 440 410 460 385 500 360 480ZM650 580H710V600H650ZM650 620H710V645H650Z"/>
              <g fill="none" stroke="#fff" stroke-linejoin="round">
                <path vector-effect="non-scaling-stroke" stroke-width="5" d="M90 308 290 490 600 770 850 1000 980 1140 1280 1492M66 330 260 510 590 780 840 1000 960 1140 1100 1300 1260 1492"/>
                <path vector-effect="non-scaling-stroke" stroke-width="12" d="M1494 680Q1420 850 1410 1100L1395 1492"/>
                <path vector-effect="non-scaling-stroke" stroke-width="4" d="M675 308 640 460 627 560 630 720 595 790Q590 860 610 850M66 370 130 308M66 340 100 308M100 345 190 400M66 1322 150 1290 370 1273H515L530 1232 800 1210Q930 1190 985 1135M482 1273 490 1360 522 1492M815 510 1245 528 1240 695M815 510 805 675 1397 708 1390 860 940 840M948 308 943 510M805 675V800L700 900M1430 1150Q1250 1250 1160 1345 980 1450 920 1465 880 1450 860 1330L825 1208M1100 960 880 985 860 1010M1100 960 1105 1010 1385 995V1140"/>
                <path vector-effect="non-scaling-stroke" stroke-width="3" d="M255 440Q310 350 360 362 410 390 545 520 580 555 625 550M410 390 450 345 655 362M1395 1150 1190 1190Q1100 1210 1090 1250M962 1240 1030 1420M1460 1130Q1470 1020 1494 1045M1440 650Q1430 480 1480 308M1480 380Q1430 550 1450 640L1420 900M1125 525 1115 860M700 1492 515 1475M1420 1340Q1450 1230 1494 1245M1475 1060V1140L1494 1170M960 1385 1000 1210 1080 1110 1100 1090 1105 1010M1270 1492 1450 1310M1197 1000V1190L1335 1180V1110H1197M1275 700V850"/>
                <path vector-effect="non-scaling-stroke" stroke-width="1.500" d="M66 645 180 650 310 690 380 720 470 700 590 790M130 525 300 600 380 690M66 740 150 735 230 910 310 720M135 525 130 600 170 700 105 870 66 780M110 460 150 455 215 570 180 650M345 630 230 910 120 870M300 580 255 660M150 735 370 800 385 850 580 848M380 765V830H580M420 770V800H565V860M85 965 430 925 590 905M120 990 600 985M130 1050 600 1035M66 1100 430 1080 600 1080M140 1140 600 1110M140 1170 600 1170M110 960 145 1265M160 960 170 1240M205 950 210 1230M250 940 255 1230M290 930 300 1220M330 920 350 1210M390 850 390 1200M430 925 440 1200M490 920 500 1200M550 900 560 1200M575 740 585 1180M600 870 610 1190M615 870 620 1200M690 1180 660 900M735 1180 725 930M795 1180 760 970M840 1170 800 1020M890 1160 850 1070M650 1140 810 975M765 970 930 1140M660 1100H690M670 1000H690M720 1040H745M770 1100H800M780 1130H800M890 515 880 675M950 605H985V675M860 685 855 840M715 345 820 350 830 330H905V308M905 345V370M960 380H1155V308M960 440H1150M945 480Q1100 465 1240 500 1380 560 1390 570V640L1405 690M1010 1190 1060 1250 1130 1350 1060 1400 990 1250M270 530 340 580 350 560 275 500M560 1330Q620 1240 700 1300 760 1360 740 1492M560 1330 600 1492M395 1280 400 1370M115 1310 140 1492M230 1310V1492M130 1365 225 1360M130 1410H225M275 1360H350M275 1400 355 1395M280 1445H360M1230 1025H1325V1085H1230ZM1000 960 1025 1050 990 1110M1045 985H1070L1100 1080M925 1010 975 990 990 1050 975 1070ZM1130 1050H1170V1150L1100 1190M1270 1220Q1250 1300 1300 1300 1340 1260 1300 1230M1330 1380V1240L1365 1280M860 840 920 870 890 950M950 840 1025 740 1010 700M510 400Q570 420 620 420M530 650Q570 600 600 600"/>
              </g>
              <path vector-effect="non-scaling-stroke" d="M1130 1492 1220 1450M1270 1426 1375 1378M1422 1356 1494 1322M632 1150V1240" stroke="#d8d8d8" stroke-width="1.500" fill="none"/>
            </svg>
            <button aria-label="New project" class="col-start-1 row-start-1 mb-3 flex size-[70px] items-center justify-center place-self-center rounded-full bg-[#9d9d9d]"><svg class="size-[30px]"><use href="#plus"/></svg></button>
          </article>
        </div>
      </section>

      <section class="flex flex-col gap-8" aria-labelledby="recent-datasets">
        <div class="flex h-[98px] items-center justify-between border-b-2 border-[#dcdee3] pr-4">
          <h2 id="recent-datasets" class="text-[40px] leading-[56px]">Recent Datasets</h2>
          <a href="#datasets" class="flex items-center gap-[22px] text-[28px] leading-9 text-[#2bb381]">See All <svg class="h-5 w-4"><use href="#chevron"/></svg></a>
        </div>
        <div class="grid grid-cols-4 gap-10">

          <article class="h-[498px] overflow-hidden rounded-lg bg-white shadow-[0_4px_24px_rgba(58,53,90,0.10)]">
            <div class="relative h-[280px]">
              <svg class="size-full" viewBox="61 318 1429 666" preserveAspectRatio="none" aria-hidden="true">
                <rect x="61" y="318" width="1429" height="666" fill="#f7f7f7"/>
                <path fill="#eeeeee" d="M300 318H500L520 560 470 550 320 420ZM480 450 560 430 620 360 700 330 860 340 930 400 900 470 1000 520 1080 600 1120 690 1240 720 1140 800 1060 870 950 830 860 850 800 810 730 850 700 940 640 984 600 940 540 890 520 780 500 650 410 620 480 600ZM420 640 470 640 400 770 240 984 340 870ZM300 890 320 940 280 984 240 960ZM950 850 1090 900 1100 984H980ZM100 450 180 440 210 490 150 520 105 500ZM1250 760 1380 790 1400 830 1300 820Z"/>
                <path id="patches-munich-a" fill="#eeeeee"/>
                <path id="patches-munich-b" fill="#f6f6f6"/>
                <path fill="#dedede" d="M570 735 600 730V770L565 800 540 800 538 775 568 770ZM1030 365 1050 360V385L1030 390ZM1030 320 1100 320 1080 340 1040 335ZM1115 318H1200L1180 330ZM635 465 655 458 668 475 640 485ZM855 450 870 430 875 445 860 468ZM890 780 920 778V797H893ZM368 345 390 350 380 370ZM415 355H427V375H415ZM1270 350 1290 360 1295 390 1275 380ZM1205 535 1220 540 1215 548ZM565 538 578 542 568 552ZM835 780 855 775 845 800ZM820 690 850 690 840 705ZM720 465 740 460 725 475Z"/>
                <g fill="none" stroke="#fff">
                  <path vector-effect="non-scaling-stroke" stroke-width="2.500" d="M310 330 480 490 490 450M1010 330Q1180 410 1220 500 1270 570 1265 660 1250 760 1150 880L1100 984M900 610 1250 600Q1400 550 1490 515M61 810Q160 790 220 730L250 720M310 640Q380 630 420 660 520 690 660 670M560 890V810L640 740M560 890Q540 950 490 984M61 545 170 570Q200 600 310 590L330 560 340 520 320 560 340 640M750 730Q800 720 850 870L840 984M390 700Q470 740 520 780M880 670 1000 690 1200 750 1330 810Q1400 900 1470 870M65 910 180 920M965 318 890 480 830 570M890 850Q900 900 970 984M100 984Q80 900 120 870 130 830 105 800"/>
                  <path vector-effect="non-scaling-stroke" stroke-width="1.500" d="M620 480H900M640 520 900 510M660 560 860 550M690 400V600M740 400 745 600M800 400V560M850 420 830 560M600 600V820M640 640 700 700M940 470 960 600M980 460 990 620M700 590 860 640M880 640 1120 680M600 720 740 730M540 620 740 640M790 600 740 560 660 500M950 740V800H1000V740ZM900 730 910 850M780 730 740 770M870 800 1000 860M560 830 690 820M700 720V860M760 470 780 600M520 590 520 680M1060 600 1100 680M1160 860 1200 984M1110 880 1190 850"/>
                </g>
                <path vector-effect="non-scaling-stroke" fill="none" stroke="#cfcfcf" stroke-width="1.500" d="M61 318 350 430 460 550M495 318 545 500Q550 580 620 595L740 605M160 318 495 325 600 385 700 395 840 388 940 420 970 460 985 630M695 325 550 520M61 440 120 420 440 545 530 580M61 765Q120 740 160 740 200 670 280 650L430 600Q450 560 480 560L540 580 640 595 750 700 830 690 890 635Q960 630 1010 670L1490 838M460 560 420 650 380 740 260 900 240 984M650 600 690 660 685 840Q660 890 690 895 740 880 768 984M1490 440 1310 510 1050 590 980 635 900 632M840 700 880 840 885 984M870 800 960 810Q1020 890 1090 984M655 670 660 620 690 598"/>
                <path vector-effect="non-scaling-stroke" fill="none" stroke="#c8c8c8" stroke-width="3" d="M530 578 620 592 745 604M970 320 930 420 880 510 845 580M750 700 820 645M1030 330 1070 345 1110 320M750 735 740 760 720 770 715 850 690 890 710 910 690 960 655 975"/>
                <path vector-effect="non-scaling-stroke" fill="none" stroke="#cfcfcf" stroke-width="1.500" stroke-dasharray="5 3" d="M61 345 90 340 110 375 95 320M245 470 232 525 260 530 305 600 310 655 350 665 400 620 495 650 500 760 525 765 520 860 600 920 610 945 670 930 705 870 735 850 820 810 835 850 900 835 1070 880 1075 820 1145 775 1150 730M61 660 95 685 100 705 205 755 210 738 265 720 290 745 310 700 350 660M295 735 390 775 340 900 370 930 382 984M930 430 1010 455 1015 425 1095 430 1090 480 1050 530 1060 590 1145 580 1170 620 1150 690 1100 695M1270 318 1265 390 1280 430 1300 450 1295 550 1240 620 1265 680 1270 760 1325 820 1335 915 1395 940 1390 970 1340 970M300 360 310 340 400 325 480 325M700 870 710 920"/>
              </svg>
              <span class="absolute top-4 left-4 flex h-12 w-[104px] items-center justify-center rounded-full bg-[#888b92] text-[21px] font-bold text-white">Raster</span>
              <span class="absolute top-4 right-4 flex size-[60px] items-center justify-center rounded-full bg-[#888b92]"><svg class="h-6 w-7" viewBox="0 0 28 24" fill="none" stroke="#fff" stroke-width="3"><rect x="2" y="9" width="16" height="10" rx="5" transform="rotate(-28 10 14)"/><rect x="10" y="5" width="16" height="10" rx="5" transform="rotate(-28 18 10)"/></svg></span>
              <span class="absolute top-[122px] left-[51%] -translate-x-1/2 font-['Roboto',sans-serif] text-[13px] leading-4 text-[#858585]">Munich</span>
            </div>
            <div class="px-12 pt-7">
              <div class="flex items-center justify-between gap-4">
                <h3 class="text-[32px] leading-12 whitespace-nowrap">Topographische Karte 1:200.000</h3>
                <button aria-label="More options" class="shrink-0"><svg class="h-9 w-6"><use href="#kebab"/></svg></button>
              </div>
              <div class="mt-7 flex items-center gap-4 text-[25px] leading-8 text-[#79767d]"><svg class="size-[50px]"><use href="#avatar"/></svg>about 24 hours ago</div>
            </div>
          </article>

          <article class="h-[498px] overflow-hidden rounded-lg bg-white shadow-[0_4px_24px_rgba(58,53,90,0.10)]">
            <div class="relative h-[280px]">
              <svg class="size-full" aria-hidden="true"><use href="#map-heidelberg"/></svg>
              <span class="absolute top-4 left-4 flex h-12 w-[115px] items-center justify-center rounded-full bg-[#888b92] text-[21px] font-bold text-white">Feature</span>
              <span class="absolute top-[70px] left-[29%] -translate-x-1/2 font-['Roboto',sans-serif] text-[12px] leading-4 text-[#858585]">Mannheim</span>
              <span class="absolute top-[128px] left-[45%] -translate-x-1/2 font-['Roboto',sans-serif] text-[12px] leading-4 text-[#858585]">Heidelberg</span>
            </div>
            <div class="px-12 pt-7">
              <div class="flex items-center justify-between gap-4">
                <h3 class="text-[32px] leading-12 whitespace-nowrap">Erschlossene Bevölkerung [%]</h3>
                <button aria-label="More options" class="shrink-0"><svg class="h-9 w-6"><use href="#kebab"/></svg></button>
              </div>
              <div class="mt-7 flex items-center gap-4 text-[25px] leading-8 text-[#79767d]"><svg class="size-[50px]"><use href="#avatar"/></svg>7 days ago</div>
            </div>
          </article>

          <article class="h-[498px] overflow-hidden rounded-lg bg-white shadow-[0_4px_24px_rgba(58,53,90,0.10)]">
            <div class="relative h-[280px]">
              <svg class="size-full" aria-hidden="true"><use href="#map-heidelberg"/></svg>
              <span class="absolute top-4 left-4 flex h-12 w-[115px] items-center justify-center rounded-full bg-[#888b92] text-[21px] font-bold text-white">Feature</span>
              <span class="absolute top-[70px] left-[29%] -translate-x-1/2 font-['Roboto',sans-serif] text-[12px] leading-4 text-[#858585]">Mannheim</span>
              <span class="absolute top-[128px] left-[45%] -translate-x-1/2 font-['Roboto',sans-serif] text-[12px] leading-4 text-[#858585]">Heidelberg</span>
            </div>
            <div class="px-12 pt-7">
              <div class="flex items-center justify-between gap-4">
                <h3 class="text-[32px] leading-12 whitespace-nowrap">heatmap_angebot_bevoelkerung...</h3>
                <button aria-label="More options" class="shrink-0"><svg class="h-9 w-6"><use href="#kebab"/></svg></button>
              </div>
              <div class="mt-7 flex items-center gap-4 text-[25px] leading-8 text-[#79767d]"><svg class="size-[50px]"><use href="#avatar"/></svg>7 days ago</div>
            </div>
          </article>

          <article class="grid h-[498px] overflow-hidden rounded-lg bg-white shadow-[0_4px_24px_rgba(58,53,90,0.10)]">
            <svg class="col-start-1 row-start-1 h-[498px] w-full" viewBox="0 0 674 498" preserveAspectRatio="none" aria-hidden="true">
              <defs><pattern id="grid" width="8.800" height="8.800" patternUnits="userSpaceOnUse" x="1" y="2"><path d="M0 .5H8.800M.5 0V8.800" stroke="#efefef" stroke-dasharray="2.200"/></pattern></defs>
              <rect width="674" height="498" fill="url(#grid)"/>
              <path d="M10.500 0V498M63.500 0V498M98.500 0V498M186.500 0V498M265.500 0V498M353.500 0V498M388.500 0V498M441.500 0V498M476.500 0V498M564.500 0V498M652.500 0V498M0 11.500H674M0 64.500H674M0 99.500H674M0 134.500H674M0 143.500H674M0 178.500H674M0 222.500H674M0 266.500H674M0 301.500H674M0 309.500H674M0 345.500H674M0 380.500H674M0 389.500H674M0 424.500H674M0 433.500H674M0 468.500H674" stroke="#e7e7e7" stroke-dasharray="2" fill="none"/>
            </svg>
            <button aria-label="New dataset" class="col-start-1 row-start-1 mb-3 flex size-[70px] items-center justify-center place-self-center rounded-full bg-[#9d9d9d]"><svg class="size-[30px]"><use href="#plus"/></svg></button>
          </article>
        </div>
      </section>
    </div>
  </main>
</div>

<script>
// Deterministic generator, so the thumbnails look the same on every load.
let seed = 7;
const rnd = () => (seed = (seed * 16807) % 2147483647) / 2147483647;
const byId = id => document.getElementById(id);

// Small irregular land-use patches.
function patches(id, x, y, w, h, count, size) {
  let d = '';
  for (let i = 0; i < count; i++) {
    const cx = x + rnd() * w, cy = y + rnd() * h, r = size * (0.4 + rnd());
    for (let k = 0; k < 7; k++) {
      const a = k / 7 * 6.283, q = r * (0.5 + rnd() * 0.8);
      d += (k ? 'L' : 'M') + (cx + Math.cos(a) * q).toFixed(1) + ' ' + (cy + Math.sin(a) * q * 1.25).toFixed(1);
    }
    d += 'Z';
  }
  byId(id).setAttribute('d', d);
}
patches('patches-west-a', 61, 84, 1429, 784, 110, 16);
patches('patches-west-b', 420, 300, 900, 560, 90, 12);
patches('patches-metro', 59, 58, 1468, 812, 130, 16);
patches('patches-munich-a', 61, 318, 1429, 666, 110, 14);
patches('patches-munich-b', 500, 350, 600, 500, 70, 11);
patches('patches-heidelberg', 50, 95, 1468, 784, 230, 10);

// Charging reachability: coloured hexagons around the stations.
const clusters = [[550,290,80,105],[500,200,32,50],[1045,410,90,120],[1050,530,45,60],[760,650,75,100],[740,730,70,60],[890,590,75,75],[960,560,55,70],[820,560,70,60],[1040,760,90,125],[580,830,75,95],[1080,65,35,50],[880,850,25,35]];
const cores = [[545,270,60,80],[1040,430,60,95],[750,680,75,70],[1035,750,70,120],[570,850,45,60],[815,610,35,50],[1075,65,30,35]];
const near = (list, x, y) => Math.min(...list.map(c => Math.hypot((x - c[0]) / c[2], (y - c[1]) / c[3])));
const fills = { '#c84f38': '', '#cb6456': '', '#a26a70': '', '#7a3f5f': '' };
for (let row = 0; row < 38; row++) for (let col = 0; col < 76; col++) {
  const x = 50 + col * 19.6 + (row % 2) * 9.8, y = 58 + row * 22.6, d = near(clusters, x, y) + (rnd() - 0.5) * 0.4, c = near(cores, x, y) + (rnd() - 0.5) * 0.5;
  if (d > 1) continue;
  const f = c < 0.42 ? '#7a3f5f' : c < 0.8 ? '#a26a70' : d < 0.66 + (rnd() - 0.5) * 0.3 ? '#cb6456' : '#c84f38';
  fills[f] += `M${x} ${y - 15}l9.800 7.500v15l-9.800 7.500l-9.800 -7.500v-15z`;
}
byId('hex-clusters').innerHTML = Object.entries(fills).map(([f, d]) => `<path fill="${f}" d="${d}"/>`).join('');

const dotted = [[725,85,50,35],[765,210,30,50],[550,300,75,90],[1110,330,40,70],[1190,440,60,60],[860,440,45,80],[830,330,15,40],[800,620,90,120],[900,590,60,90],[255,560,40,30],[550,740,40,50],[590,840,60,40],[1085,780,40,110],[1060,420,50,90],[1185,500,25,25],[895,740,20,40],[1480,340,15,30],[450,280,25,30],[500,190,25,30],[1010,780,40,50]];
let dots = '';
for (let x = 57; x < 1518; x += 15.2) for (let y = 70; y < 870; y += 20) if (near(dotted, x, y) + (rnd() - 0.5) * 0.3 < 1) dots += `M${x.toFixed(1)} ${y}h0`;
byId('hex-dots').setAttribute('d', dots);

const pumps = [[540,267],[1027,427],[932,579],[806,640],[729,670],[597,846],[1026,807],[1039,846],[58,430],[1024,731,'#d9822b']];
byId('pumps').innerHTML = pumps.map(([x, y, c]) => `<rect x="${x - 13}" y="${y - 18}" width="26" height="36" rx="3" fill="${c || '#2f66d6'}"/><path fill="#fff" d="M${x - 9} ${y - 13}h10v26h-10zM${x + 3} ${y - 3}h3v-8h3v18h-6z"/>`).join('');

// Walking accessibility: coloured points around every metro stop.
const stops = [[837,148],[877,150],[897,154],[914,196],[921,240],[1040,158],[1030,204],[1034,264],[749,324],[776,319],[809,318],[806,346],[805,383],[806,421],[817,470],[851,490],[853,296],[878,334],[905,353],[923,306],[923,374],[937,400],[970,400],[959,425],[911,427],[953,454],[908,459],[901,481],[945,492],[892,508],[1017,309],[1004,333],[989,363],[1050,471],[1040,497],[1037,526],[1014,547],[992,566],[898,544],[933,542],[963,544],[907,577],[868,565],[827,576],[788,571],[744,568],[884,599],[929,603],[862,622],[858,652],[859,690],[852,748],[827,765],[793,767],[766,771],[725,782],[705,803],[677,818],[658,708],[668,674],[700,658],[735,669],[773,660],[800,666],[827,666],[934,653],[942,676],[963,690],[983,698],[916,694],[929,709],[946,733],[942,770],[1008,605],[1046,648],[1021,657],[1080,658],[1086,614],[1119,618],[1165,619],[1185,592],[1238,577],[1272,577],[1120,709],[1120,750],[1112,799]];
const heat = ['#3fb98b', '#8dbd72', '#ddb255', '#e38b52', '#d3605a', '#b44560'];
const layers = heat.map(() => '');
let halo = '';
for (const [x, y] of stops) {
  halo += `M${x} ${y}h0`;
  for (let i = 0; i < 34; i++) {
    const a = rnd() * 6.283, r = Math.sqrt(rnd()) * 42;
    const px = x + Math.cos(a) * r, py = y + Math.sin(a) * r * 1.2;
    const centre = Math.max(0, 1.2 - Math.hypot((px - 940) / 190, (py - 480) / 230));
    const wave = Math.sin(px / 23 + 1) * Math.cos(py / 31) * 1.6;
    const k = Math.max(0, Math.min(5, Math.floor(2.4 + centre * 2 + wave + (rnd() - 0.5) * 2.4)));
    layers[k] += `M${px.toFixed(0)} ${py.toFixed(0)}h0`;
  }
}
byId('metro-heat').innerHTML = `<path vector-effect="non-scaling-stroke" stroke="#6f9fc4" stroke-opacity=".35" stroke-width="38" stroke-linecap="round" d="${halo}"/>` +
  layers.map((d, i) => `<path vector-effect="non-scaling-stroke" stroke="${heat[i]}" stroke-opacity=".8" stroke-width="4" stroke-linecap="round" d="${d}"/>`).join('');
const stopPath = stops.map(([x, y]) => `M${x} ${y}h0`).join('');
byId('metro-stops-ring').setAttribute('d', stopPath);
byId('metro-stops').setAttribute('d', stopPath);
</script>
</body>
</html>
